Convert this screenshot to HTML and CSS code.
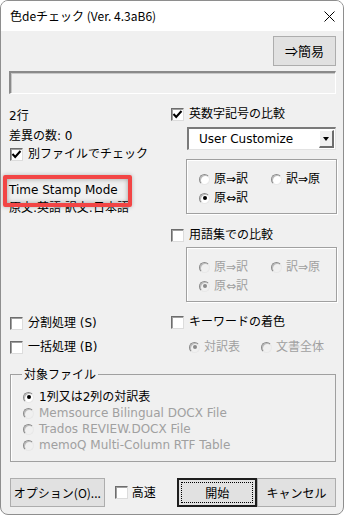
FILE: index.html
```html
<!DOCTYPE html>
<html lang="ja">
<head>
<meta charset="utf-8">
<link rel="stylesheet" href="styles.css">
</head>
<body>
<div class="window">
  <div class="titlebar">
    <span class="title">色deチェック (Ver. 4.3aB6)</span>
    <svg class="close" width="11" height="11" viewBox="0 0 11 11"><path d="M0.5 0.5 L10.5 10.5 M10.5 0.5 L0.5 10.5" stroke="#000" stroke-width="1" fill="none"/></svg>
  </div>
  <div class="body">
    <div class="toprow"><div class="btn btn-simple">⇒簡易</div></div>
    <div class="progress"></div>
    <div class="columns">
      <div class="col left">
        <div class="line m14">2行</div>
        <div class="line m4">差異の数: 0</div>
        <div class="check m2"><span class="cb"><svg width="11" height="11" viewBox="0 0 11 11"><path d="M1.5 5 L4.2 8 L9.5 2" stroke="#000" stroke-width="2" fill="none"/></svg></span>別ファイルでチェック</div>
        <div class="line m20">Time Stamp Mode</div>
        <div class="line m2">原文:英語 訳文:日本語</div>
        <div class="check m99"><span class="cb"></span>分割処理 (S)</div>
        <div class="check m8"><span class="cb"></span>一括処理 (B)</div>
      </div>
      <div class="col right">
        <div class="check m12"><span class="cb"><svg width="11" height="11" viewBox="0 0 11 11"><path d="M1.5 5 L4.2 8 L9.5 2" stroke="#000" stroke-width="2" fill="none"/></svg></span>英数字記号の比較</div>
        <div class="combo">
          <span class="combo-text">User Customize</span>
          <span class="combo-btn"><span class="tri"></span></span>
        </div>
        <div class="group g1">
          <div class="radio-row">
            <div class="radio"><span class="rb"></span>原⇒訳</div>
            <div class="radio"><span class="rb"></span>訳⇒原</div>
          </div>
          <div class="radio-row r2">
            <div class="radio"><span class="rb on"></span>原⇔訳</div>
          </div>
        </div>
        <div class="check m13"><span class="cb"></span>用語集での比較</div>
        <div class="group g2 disabled">
          <div class="radio-row">
            <div class="radio"><span class="rb"></span>原⇒訳</div>
            <div class="radio"><span class="rb"></span>訳⇒原</div>
          </div>
          <div class="radio-row r2">
            <div class="radio"><span class="rb on"></span>原⇔訳</div>
          </div>
        </div>
        <div class="check m12"><span class="cb"></span>キーワードの着色</div>
        <div class="radio-row kw disabled">
          <div class="radio"><span class="rb on"></span>対訳表</div>
          <div class="radio"><span class="rb"></span>文書全体</div>
        </div>
      </div>
    </div>
    <fieldset class="files">
      <legend>対象ファイル</legend>
      <div class="radio frow"><span class="rb on"></span>1列又は2列の対訳表</div>
      <div class="radio frow dis"><span class="rb"></span>Memsource Bilingual DOCX File</div>
      <div class="radio frow dis"><span class="rb"></span>Trados REVIEW.DOCX File</div>
      <div class="radio frow dis"><span class="rb"></span>memoQ Multi-Column RTF Table</div>
    </fieldset>
    <div class="buttons">
      <div class="btn btn-opt">オプション(O)...</div>
      <div class="check fast"><span class="cb"></span>高速</div>
      <div class="btn btn-start"><span class="focus">開始</span></div>
      <div class="btn btn-cancel">キャンセル</div>
    </div>
  </div>
  <div class="annotation"></div>
</div>
</body>
</html>
```

FILE: styles.css
```css
html, body {
  margin: 0;
  padding: 0;
  background: #ffffff;
}
body {
  font-family: "DejaVu Sans", "Noto Sans CJK JP", sans-serif;
  font-size: 12px;
  color: #000;
}
.window {
  position: relative;
  width: 344px;
  height: 515px;
  box-sizing: border-box;
  border: 1px solid #8e8e8e;
  border-radius: 8px;
  overflow: hidden;
  background: #f0f0f0;
  display: flex;
  flex-direction: column;
}
.titlebar {
  height: 30px;
  flex: none;
  background: #ffffff;
  display: flex;
  align-items: center;
  justify-content: space-between;
  padding: 0 7px 0 9px;
}
.title {
  font-family: "Noto Sans CJK JP", sans-serif;
  font-size: 12px;
  line-height: 16px;
}
.close {
  display: block;
  margin-right: 1px;
}
.body {
  padding: 5px 7px 0 8px;
  display: flex;
  flex-direction: column;
}
.toprow {
  display: flex;
  justify-content: flex-end;
}
.btn {
  box-sizing: border-box;
  background: #e1e1e1;
  border: 1px solid #adadad;
  display: flex;
  align-items: center;
  justify-content: center;
  font-family: "Noto Sans CJK JP", sans-serif;
  font-size: 12px;
  line-height: 16px;
}
.btn-simple {
  width: 63px;
  height: 30px;
  font-size: 13px;
}
.progress {
  margin-top: 5px;
  height: 23px;
  box-sizing: border-box;
  border-style: solid;
  border-width: 2px 1px 1px 2px;
  border-color: #8a8a8a #ffffff #ffffff #8a8a8a;
  box-shadow: inset 1px 1px 0 #c8c8c8;
  background: #f0f0f0;
}
.columns {
  display: grid;
  grid-template-columns: 162px 1fr;
}
.col {
  display: flex;
  flex-direction: column;
  align-items: flex-start;
}
.line {
  height: 16px;
  line-height: 16px;
  white-space: nowrap;
}
.m2 { margin-top: 2px; }
.m4 { margin-top: 4px; }
.m8 { margin-top: 8px; }
.m12 { margin-top: 12px; }
.m13 { margin-top: 13px; }
.m14 { margin-top: 14px; }
.m20 { margin-top: 20px; }
.m99 { margin-top: 99px; }

.check {
  display: flex;
  align-items: center;
  height: 16px;
  line-height: 16px;
  white-space: nowrap;
}
.left .check {
  padding-left: 1px;
}
.cb {
  width: 13px;
  height: 13px;
  box-sizing: border-box;
  background: #fff;
  border-style: solid;
  border-width: 1px;
  border-color: #6d6d6d #dcdcdc #dcdcdc #6d6d6d;
  box-shadow: inset 1px 1px 0 #a0a0a0;
  margin-right: 5px;
  flex: none;
  display: flex;
  align-items: center;
  justify-content: center;
}
.cb svg {
  display: block;
}
.combo {
  margin-top: 5px;
  margin-left: 16px;
  width: 149px;
  height: 23px;
  box-sizing: border-box;
  background: #fff;
  border-style: solid;
  border-width: 2px 1px 1px 2px;
  border-color: #7a7a7a #e3e3e3 #e3e3e3 #7a7a7a;
  display: flex;
  align-items: center;
  justify-content: space-between;
  padding-left: 10px;
  padding-right: 1px;
}
.combo-text {
  line-height: 16px;
}
.combo-btn {
  width: 15px;
  height: 18px;
  box-sizing: border-box;
  background: #f0f0f0;
  border-style: solid;
  border-width: 1px 2px 2px 1px;
  border-color: #ffffff #6d6d6d #6d6d6d #ffffff;
  display: flex;
  align-items: center;
  justify-content: center;
}
.tri {
  width: 0;
  height: 0;
  border-left: 3.5px solid transparent;
  border-right: 3.5px solid transparent;
  border-top: 4px solid #000;
}
.group {
  margin-left: 15px;
  width: 151px;
  height: 55px;
  box-sizing: border-box;
  border: 1px solid #a0a0a0;
  box-shadow: inset 1px 1px 0 #fff, 1px 1px 0 #fff;
  padding: 11px 0 0 12px;
}
.g1 { margin-top: 9px; }
.g2 { margin-top: 4px; }
.radio-row {
  display: grid;
  grid-template-columns: 72px auto;
  height: 16px;
}
.radio-row.r2 { margin-top: 3px; }
.radio {
  display: flex;
  align-items: center;
  height: 16px;
  line-height: 16px;
  white-space: nowrap;
}
.rb {
  width: 11px;
  height: 11px;
  box-sizing: border-box;
  border-radius: 50%;
  background: #fff;
  border: 1px solid;
  border-color: #8a8a8a #e8e8e8 #e8e8e8 #8a8a8a;
  box-shadow: inset 1px 1px 0 #bdbdbd;
  margin-right: 4px;
  flex: none;
  position: relative;
}
.rb.on::after {
  content: "";
  position: absolute;
  left: 2.5px;
  top: 2.5px;
  width: 4px;
  height: 4px;
  border-radius: 50%;
  background: #000;
}
.disabled .radio,
.radio.dis {
  color: #a0a0a0;
}
.disabled .rb,
.radio.dis .rb {
  background: #f0f0f0;
}
.disabled .rb.on::after {
  background: #8a8a8a;
}
.kw {
  margin-top: 9px;
  margin-left: 18px;
}
.files {
  margin: 11px 0 0 1px;
  padding: 7px 0 8px 12px;
  border: 1px solid #a0a0a0;
  box-shadow: inset 1px 0 0 #fff;
  min-width: 0;
}
.files legend {
  padding: 0 2px;
  margin-left: -1px;
  line-height: 16px;
  font-family: "Noto Sans CJK JP", sans-serif;
}
.frow {
  height: 16px;
}
.frow .rb {
  margin-right: 5px;
}
.buttons {
  margin-top: 16px;
  margin-left: 1px;
  display: flex;
  align-items: center;
}
.btn-opt {
  width: 95px;
  height: 29px;
}
.fast {
  margin-left: 10px;
  width: 63px;
}
.fast .cb { margin-right: 4px; }
.btn-start {
  width: 80px;
  height: 29px;
  border: 2px solid #1e1e1e;
  padding: 2px;
}
.btn-start .focus {
  flex: 1;
  align-self: stretch;
  border: 1px dotted #000;
  display: flex;
  align-items: center;
  justify-content: center;
}
.btn-cancel {
  width: 79px;
  height: 29px;
}
.annotation {
  position: absolute;
  left: 2px;
  top: 174px;
  width: 129px;
  height: 32px;
  box-sizing: border-box;
  border: 4px solid #f24545;
  border-radius: 2px;
  box-shadow: inset 0 0 5px rgba(0,0,0,0.35), 0 0 4px rgba(0,0,0,0.25);
}
```
